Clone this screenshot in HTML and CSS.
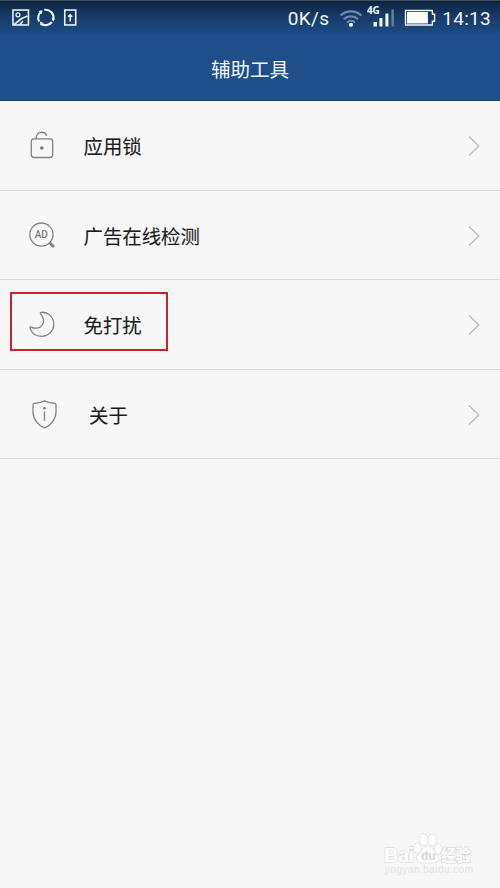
FILE: index.html
```html
<!DOCTYPE html>
<html lang="zh-CN">
<head>
<meta charset="utf-8">
<title>辅助工具</title>
<link rel="stylesheet" href="styles.css">
</head>
<body>
<header class="top">
  <div class="status">
    <svg class="notices" width="70" height="22" viewBox="0 0 70 22" fill="none" stroke="#e9f2f8" stroke-width="1.6">
      <rect x="2" y="3" width="15.500" height="15"/>
      <circle cx="7" cy="7.800" r="2" stroke-width="1.300"/>
      <path d="M3 17.500C6.500 16 8 11.500 16.500 9M9 17.500L12 14" stroke-width="1.600"/>
      <path d="M30.500 4.500A8 8 0 0 0 28.200 14.500M30.500 17A8 8 0 0 0 41 15M42.500 12.500A8 8 0 0 0 33.500 2.800" stroke-width="2.200"/>
      <path d="M27.500 4l4-.8-.5 4zM29.500 18.500l-.5-4 3.500 1.300zM40.500 11.500l2 3 1.700-3z" fill="#e9f2f8" stroke="none"/>
      <rect x="54" y="3" width="11" height="15"/>
      <path d="M59.500 14.500V8M57.500 9.700l2-2 2 2"/>
    </svg>
    <span class="speed">0K/s</span>
    <svg class="wifi" width="24" height="20" viewBox="0 0 24 20" fill="none" stroke="#6f8aad" stroke-width="2.200">
      <path d="M1.500 6.500A15.500 15.500 0 0 1 22.500 6.500M4.800 10.200A10.700 10.700 0 0 1 19.200 10.200M8 13.500A6 6 0 0 1 16 13.500"/>
      <circle cx="12" cy="15.800" r="2.100" fill="#fff" stroke="none"/>
    </svg>
    <svg class="signal" width="30" height="24" viewBox="0 0 30 24" fill="#f4f8fb">
      <text class="net" x="0" y="10.500">4G</text>
      <path d="M6.500 19h3.500v4.500H6.500zM12.500 15h3v8.500h-3zM18.500 10.500h3v13h-3z"/>
      <path d="M24.500 6.500h2.500v17h-2.500z" fill="#5f7ca2"/>
    </svg>
    <svg class="battery" width="32" height="18" viewBox="0 0 32 18">
      <path d="M1.500 1.500h27v3.700h2.200v7h-2.200v3.800h-27z" fill="none" stroke="#f4f8fb" stroke-width="1.400"/>
      <path d="M3 3h21v11.500h-21z" fill="#fff"/>
    </svg>
    <span class="clock">14:13</span>
  </div>
  <h1 class="title">辅助工具</h1>
</header>
<main class="list">
  <div class="row">
    <svg class="icon" width="32" height="32" viewBox="0 0 32 32">
      <rect x="5.300" y="8.800" width="21.400" height="18.700" rx="2.800"/>
      <path d="M10.300 8.800V7A5.300 5.300 0 0 1 20.600 5.900"/>
      <circle cx="15.800" cy="18" r="1.800" class="solid"/>
    </svg>
    <span class="label">应用锁</span>
    <svg class="arrow" width="12" height="22" viewBox="0 0 12 22"><path d="M1 1.500l9.800 9.500L1 20.500"/></svg>
  </div>
  <div class="row">
    <svg class="icon" width="32" height="32" viewBox="0 0 32 32">
      <circle cx="15.400" cy="14.600" r="11.600"/>
      <path d="M23.500 22.500l1.500 1.500"/>
      <path d="M24 23l4 4" class="handle"/>
      <text class="ad" x="8.700" y="18.200">AD</text>
    </svg>
    <span class="label">广告在线检测</span>
    <svg class="arrow" width="12" height="22" viewBox="0 0 12 22"><path d="M1 1.500l9.800 9.500L1 20.500"/></svg>
  </div>
  <div class="row">
    <div class="mark"></div>
    <svg class="icon" width="32" height="32" viewBox="0 0 32 32">
      <path d="M15.400 3.300C21.500 2.700 27.800 7.500 27.800 15.100C27.800 22.100 22.500 27.300 15.800 27.300C10 27.300 5.500 24.100 4 19.100C3.700 18 4.500 17.600 5.500 18.100C9 20 13.500 19.500 16 16.300C18.400 13 17.900 9 14.800 5.100C14 4.100 14.300 3.400 15.400 3.300Z"/>
    </svg>
    <span class="label">免打扰</span>
    <svg class="arrow" width="12" height="22" viewBox="0 0 12 22"><path d="M1 1.500l9.800 9.500L1 20.500"/></svg>
  </div>
  <div class="row shifted">
    <svg class="icon" width="32" height="32" viewBox="0 0 32 32">
      <path d="M15.500 1.800Q20.500 4.100 26.300 4.300Q27 4.500 27 6V13C27 20 22 26.300 15.500 29C9 26.300 4 20 4 13V6Q4 4.500 4.700 4.300Q10.500 4.100 15.500 1.800Z"/>
      <path d="M15.500 12.500V22"/>
      <circle cx="15.500" cy="9.300" r="1.200" class="solid"/>
    </svg>
    <span class="label">关于</span>
    <svg class="arrow" width="12" height="22" viewBox="0 0 12 22"><path d="M1 1.500l9.800 9.500L1 20.500"/></svg>
  </div>
</main>
<svg class="watermark" width="100" height="50" viewBox="0 0 100 50">
  <g class="outline">
    <text class="latin" x="2" y="28.500" textLength="30">Bai</text>
    <ellipse cx="35.500" cy="15" rx="3.500" ry="5"/>
    <ellipse cx="41.500" cy="6.500" rx="4" ry="5.500"/>
    <ellipse cx="50.500" cy="7" rx="4" ry="5.500"/>
    <ellipse cx="56" cy="16" rx="3.500" ry="5"/>
    <path d="M46 13.500C51 13.500 51.500 18 54.500 21.500C60 28 53 30.500 46 29.500C39 30.500 31 28 36.500 21.500C40 18 41 13.500 46 13.500Z"/>
    <text class="cjk" x="59" y="28" textLength="30">经验</text>
  </g>
  <text class="du" x="39" y="27">du</text>
  <text class="site" x="3" y="40" textLength="88">jingyan.baidu.com</text>
</svg>
</body>
</html>
```
FILE: styles.css
```css
* { box-sizing: border-box; }
body {
  position: relative;
  margin: 0;
  width: 500px;
  height: 888px;
  overflow: hidden;
  background: #f7f7f7;
  color: #1c1c1c;
  font-family: "Noto Sans", "Noto Sans CJK SC", sans-serif;
}
.top {
  height: 101.250px;
  border-top: 1px solid #40505e;
  border-bottom: 1px solid #17427b;
  background: linear-gradient(#0d2440 0, #173b69 16px, #1e4d88 36px, #1e4f8b 50px);
  color: #f2f7fb;
}
.status {
  display: flex;
  align-items: flex-start;
  height: 36px;
  padding: 6px 9px 0 11px;
  font-family: Roboto, sans-serif;
  line-height: 24px;
}
.speed { width: 44px; margin-left: 207px; font-size: 19px; letter-spacing: .4px; }
.wifi { margin: 2px 0 0 7px; }
.signal { margin: -4px 0 0 5px; }
.net { font: bold 10px "Open Sans", sans-serif; letter-spacing: -.3px; }
.battery { margin: 2px 0 0 7px; }
.clock { margin-left: 6px; font-size: 19px; letter-spacing: .3px; white-space: nowrap; }
.title {
  margin: 0;
  height: 64px;
  font: 400 19.500px/64px "Noto Sans CJK SC", sans-serif;
  text-align: center;
}
.row {
  position: relative;
  display: flex;
  align-items: center;
  height: 89.500px;
  padding: 1px 20px 0 26px;
  border-bottom: 1px solid #d9d9d9;
}
.icon {
  flex: none;
  fill: none;
  stroke: #828282;
  stroke-width: 1.300;
}
.solid { fill: #777; stroke: none; }
.handle { stroke-width: 2.800; }
.ad { fill: #777; stroke: none; font: 500 10px Roboto, sans-serif; }
.label {
  flex: 1;
  margin-left: 25.500px;
  font: 400 19.400px/30px "Noto Sans CJK SC", sans-serif;
  -webkit-text-stroke: .1px #1c1c1c;
}
.shifted { padding-left: 29px; }
.shifted .label { margin-left: 28px; }
.arrow { flex: none; fill: none; stroke: #b9b9b9; stroke-width: 1.200; }
.mark {
  position: absolute;
  left: 10px;
  top: 12px;
  width: 158px;
  height: 59px;
  border: 2px solid #ca2228;
}
.watermark { position: absolute; left: 382px; top: 833px; }
.outline { fill: #fff; stroke: #dadada; stroke-width: 1.400; paint-order: stroke; }
.latin { font: bold 20px "Liberation Sans", sans-serif; }
.du { fill: #d5d5d5; font: bold 12px "Liberation Sans", sans-serif; }
.cjk { font: bold 15.500px "Noto Sans CJK SC", sans-serif; }
.site { fill: #e3e3e3; font: 10px "Liberation Sans", sans-serif; }
```
